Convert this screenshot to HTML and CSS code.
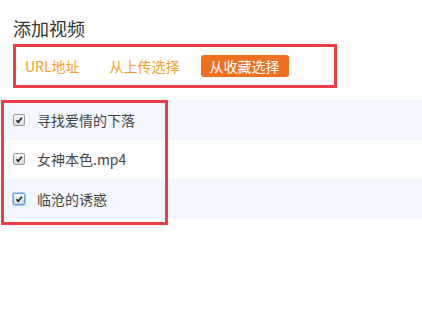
FILE: index.html
```html
<!DOCTYPE html>
<html lang="zh-CN">
<head>
  <meta charset="UTF-8" />
  <meta name="viewport" content="width=device-width, initial-scale=1.0"/>
  <title>添加视频</title>
  <link rel="stylesheet" href="styles.css">
</head>
<body>
  <div class="panel">
    <h2>添加视频</h2>

    <div class="tabs">
      <a class="tab">URL地址</a>
      <a class="tab">从上传选择</a>
      <a class="tab active">从收藏选择</a>
    </div>

    <div class="list-wrap">
      <ul class="list">
        <li class="row">
          <span class="cb"><svg viewBox="0 0 12 12"><path d="M3 6.2 L5 8.6 L9.4 3.2" /></svg></span>
          <span class="name">寻找爱情的下落</span>
        </li>
        <li class="row">
          <span class="cb"><svg viewBox="0 0 12 12"><path d="M3 6.2 L5 8.6 L9.4 3.2" /></svg></span>
          <span class="name">女神本色.mp4</span>
        </li>
        <li class="row">
          <span class="cb focus"><svg viewBox="0 0 12 12"><path d="M3 6.2 L5 8.6 L9.4 3.2" /></svg></span>
          <span class="name">临沧的诱惑</span>
        </li>
      </ul>
      <!-- 标注框 -->
      <div class="mark"></div>
    </div>
  </div>
</body>
</html>
```

FILE: styles.css
```css
* {
  margin: 0;
  padding: 0;
  box-sizing: border-box;
  font-family: 'Microsoft YaHei', 'Noto Sans CJK SC', sans-serif;
}

body {
  background-color: #fff;
  color: #333;
}

.panel {
  padding-top: 16px;
}

h2 {
  font-size: 18px;
  font-weight: normal;
  line-height: 24px;
  color: #333;
  padding-left: 13px;
}

.tabs {
  display: flex;
  align-items: center;
  gap: 12px;
  margin: 4px 0 0 13px;
  width: 324px;
  height: 44px;
  border: 3px solid #ec3f45;
}

.tab {
  font-size: 14px;
  line-height: 22px;
  padding: 0 9px;
  color: #f5a02a;
  cursor: pointer;
}

.tab.active {
  background-color: #f07021;
  color: #fff;
  border-radius: 3px;
}

.list-wrap {
  position: relative;
  margin-top: 12px;
  height: 125px;
}

.list {
  list-style: none;
}

.row {
  display: flex;
  align-items: center;
  height: 39.5px;
  padding-left: 13px;
}

.row:nth-child(odd) {
  background-color: #f1f7fd;
}

.cb {
  width: 12px;
  height: 12px;
  border: 1px solid #9a9a9a;
  border-radius: 2px;
  background: linear-gradient(#fafafa, #d8d8d8);
  display: flex;
}

.cb.focus {
  border-color: #6f9be0;
  box-shadow: 0 0 0 1px #a9c6f0;
}

.cb svg {
  width: 10px;
  height: 10px;
  fill: none;
  stroke: #222;
  stroke-width: 2;
}

.name {
  font-size: 14px;
  color: #444;
  margin-left: 12px;
}

.mark {
  position: absolute;
  left: 1px;
  top: 0;
  width: 167px;
  height: 125px;
  border: 3px solid #ec3f45;
}
```
